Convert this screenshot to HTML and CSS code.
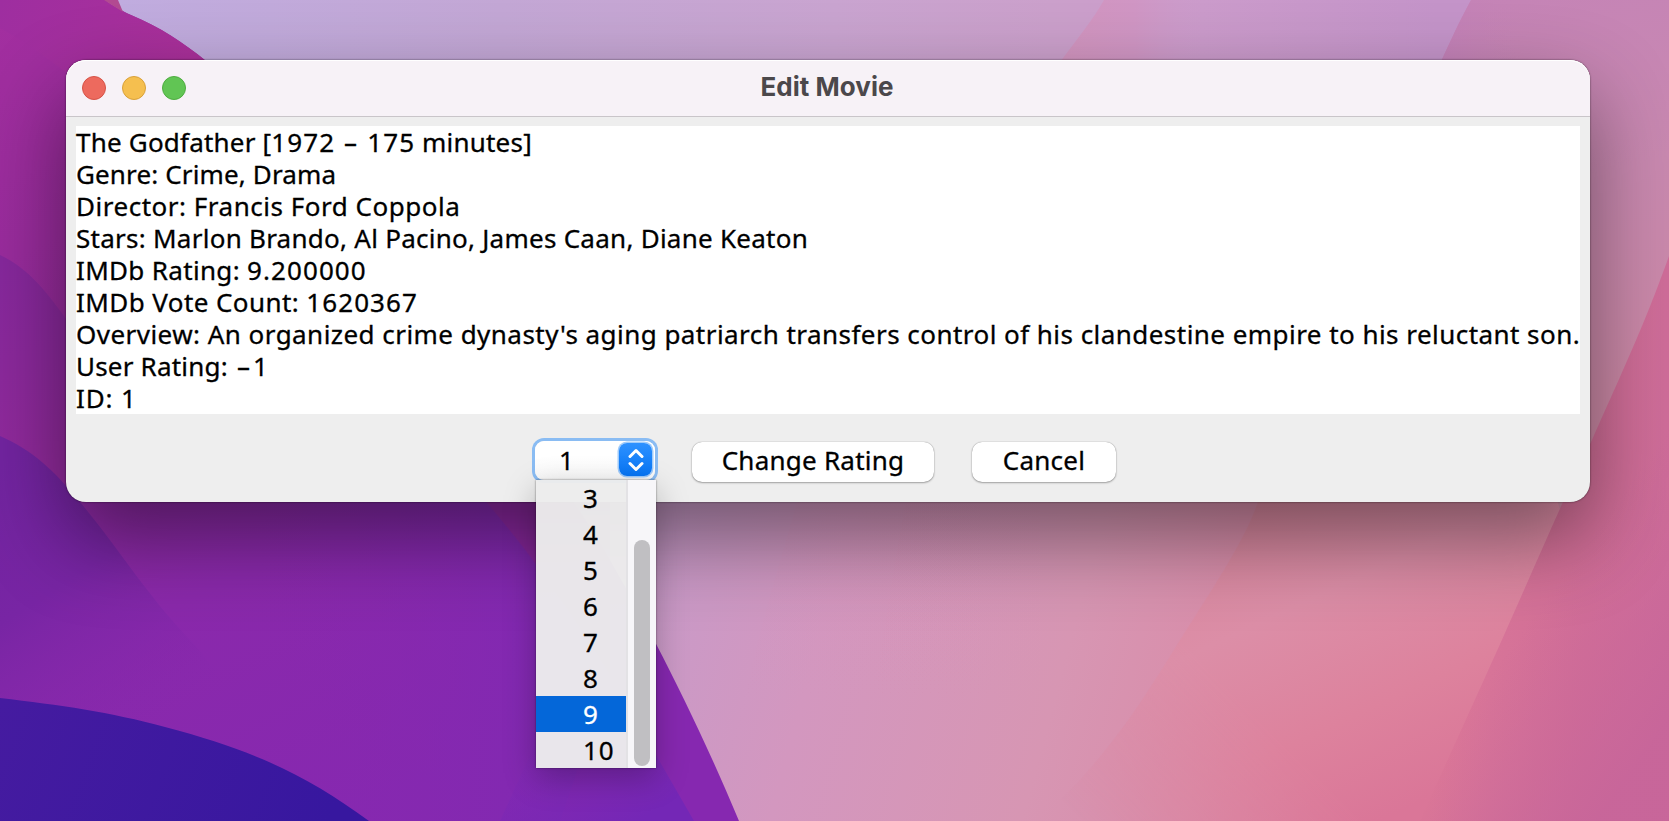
FILE: index.html
```html
<!DOCTYPE html>
<html lang="en">
<head>
<meta charset="utf-8">
<title>Edit Movie</title>
<link rel="stylesheet" href="styles.css">
</head>
<body>
<svg class="wallpaper" viewBox="0 0 1669 821" preserveAspectRatio="none" aria-hidden="true">
  <defs>
    <linearGradient id="sky" x1="0" y1="0" x2="1669" y2="0" gradientUnits="userSpaceOnUse">
      <stop offset=".07" stop-color="#c0acdf"/><stop offset=".3" stop-color="#c3a7d5"/>
      <stop offset=".5" stop-color="#c9a4d0"/><stop offset=".63" stop-color="#cba0cb"/>
      <stop offset=".72" stop-color="#cb9bcb"/><stop offset=".86" stop-color="#c494c9"/>
    </linearGradient>
    <linearGradient id="peak" x1="1060" y1="0" x2="1210" y2="0" gradientUnits="userSpaceOnUse">
      <stop offset="0" stop-color="#d295bf"/><stop offset=".5" stop-color="#d096c4"/><stop offset="1" stop-color="#cb9bcb" stop-opacity="0"/>
    </linearGradient>
    <linearGradient id="low" x1="660" y1="560" x2="1330" y2="740" gradientUnits="userSpaceOnUse">
      <stop offset="0" stop-color="#c99ac8"/><stop offset=".25" stop-color="#d397bf"/>
      <stop offset=".6" stop-color="#d796b3"/><stop offset="1" stop-color="#db86a2"/>
    </linearGradient>
    <linearGradient id="coral" x1="1230" y1="500" x2="1380" y2="821" gradientUnits="userSpaceOnUse">
      <stop offset="0" stop-color="#da889f"/><stop offset=".35" stop-color="#dc8ea7"/>
      <stop offset=".7" stop-color="#dd829d"/><stop offset="1" stop-color="#da7698"/>
    </linearGradient>
    <linearGradient id="coralFade" x1="1060" y1="800" x2="1200" y2="660" gradientUnits="userSpaceOnUse">
      <stop offset="0" stop-color="#fff" stop-opacity="0"/><stop offset=".5" stop-color="#fff" stop-opacity=".45"/><stop offset="1" stop-color="#fff"/>
    </linearGradient>
    <mask id="coralMask" maskUnits="userSpaceOnUse" x="0" y="0" width="1669" height="821"><rect width="1669" height="821" fill="url(#coralFade)"/></mask>
    <linearGradient id="mauve" x1="1520" y1="0" x2="1640" y2="460" gradientUnits="userSpaceOnUse">
      <stop offset="0" stop-color="#c584b6"/><stop offset=".4" stop-color="#c989b0"/><stop offset="1" stop-color="#cd89a3"/>
    </linearGradient>
    <linearGradient id="mauveEdge" x1="1440" y1="0" x2="1520" y2="0" gradientUnits="userSpaceOnUse">
      <stop offset="0" stop-color="#c381b8"/><stop offset="1" stop-color="#c584b6" stop-opacity="0"/>
    </linearGradient>
    <linearGradient id="rose" x1="1430" y1="0" x2="1669" y2="0" gradientUnits="userSpaceOnUse">
      <stop offset="0" stop-color="#dc7897"/><stop offset=".25" stop-color="#d77498"/><stop offset=".65" stop-color="#d16e97"/><stop offset="1" stop-color="#cf6d99"/>
    </linearGradient>
    <linearGradient id="roseFoot" x1="1530" y1="620" x2="1669" y2="720" gradientUnits="userSpaceOnUse">
      <stop offset="0" stop-color="#c8669a" stop-opacity="0"/><stop offset="1" stop-color="#c7659a" stop-opacity=".9"/>
    </linearGradient>
    <linearGradient id="purple" x1="0" y1="0" x2="380" y2="800" gradientUnits="userSpaceOnUse">
      <stop offset="0" stop-color="#a32fa0"/><stop offset=".35" stop-color="#962b9c"/>
      <stop offset=".7" stop-color="#8a29ab"/><stop offset="1" stop-color="#8628b0"/>
    </linearGradient>
    <linearGradient id="violet" x1="40" y1="440" x2="200" y2="690" gradientUnits="userSpaceOnUse">
      <stop offset="0" stop-color="#7224a0"/><stop offset=".45" stop-color="#7825a4"/><stop offset="1" stop-color="#8428ac" stop-opacity="0"/>
    </linearGradient>
    <linearGradient id="indigo" x1="0" y1="700" x2="330" y2="821" gradientUnits="userSpaceOnUse">
      <stop offset="0" stop-color="#451ba0"/><stop offset="1" stop-color="#37179f"/>
    </linearGradient>
    <linearGradient id="magenta" x1="0" y1="0" x2="200" y2="70" gradientUnits="userSpaceOnUse">
      <stop offset="0" stop-color="#9e2ea0"/><stop offset="1" stop-color="#ab309a"/>
    </linearGradient>
    <linearGradient id="plum" x1="0" y1="260" x2="60" y2="460" gradientUnits="userSpaceOnUse">
      <stop offset="0" stop-color="#86289c"/><stop offset="1" stop-color="#912a9c"/>
    </linearGradient>
    <linearGradient id="dusk" x1="260" y1="0" x2="560" y2="0" gradientUnits="userSpaceOnUse">
      <stop offset="0" stop-color="#8829ae" stop-opacity="0"/><stop offset="1" stop-color="#8129b2"/>
    </linearGradient>
    <linearGradient id="foot" x1="560" y1="700" x2="640" y2="821" gradientUnits="userSpaceOnUse">
      <stop offset="0" stop-color="#7d28b4" stop-opacity="0"/><stop offset="1" stop-color="#7427b6"/>
    </linearGradient>
    <linearGradient id="ray" x1="0" y1="500" x2="0" y2="700" gradientUnits="userSpaceOnUse">
      <stop offset="0" stop-color="#db8eb4" stop-opacity=".28"/><stop offset="1" stop-color="#db8eb4" stop-opacity="0"/>
    </linearGradient>
  </defs>
  <rect width="1669" height="821" fill="url(#sky)"/>
  <path d="M1104 0C1094 18 1078 38 1060 62H1220V0Z" fill="url(#peak)"/>
  <rect y="300" width="1669" height="521" fill="url(#low)"/>
  <path d="M800 490C782 560 760 620 745 700H980V490Z" fill="url(#ray)" opacity=".4"/>
  <path d="M908 490C895 560 884 620 875 700H1040V490Z" fill="url(#ray)" opacity=".4"/>
  <path d="M1262 490C1250 530 1228 565 1180 640C1140 705 1120 735 1080 780L1040 821H1669V400H1290Z" fill="url(#coral)" mask="url(#coralMask)"/>
  <path d="M1471 0C1459 22 1450 42 1440 64V300H1500L1560 510L1669 400V0Z" fill="url(#mauve)"/>
  <path d="M1471 0C1459 22 1450 42 1440 64H1520V0Z" fill="url(#mauveEdge)"/>
  <path d="M1669 256C1646 320 1630 355 1592 440C1560 505 1525 590 1477 695L1420 821H1669Z" fill="url(#rose)"/>
  <path d="M1669 256C1646 320 1630 355 1592 440C1560 505 1525 590 1477 695L1420 821H1669Z" fill="url(#roseFoot)"/>
  <path d="M0 0H105C112 5 122 11 131 15C160 27 184 43 206 61C330 180 500 380 600 543C644 618 690 704 739 821H0Z" fill="url(#purple)"/>
  <path d="M0 0H105C112 5 122 11 131 15C160 27 184 43 206 61L210 120H130C85 88 45 53 0 28Z" fill="url(#magenta)"/>
  <path d="M104 0H118L123 12Z" fill="#b24a91"/>
  <path d="M0 255C30 269 48 294 70 324V492C45 473 22 452 0 437Z" fill="url(#plum)"/>
  <path d="M0 436C32 450 54 470 80 502C120 550 150 600 195 645L300 780H0Z" fill="url(#violet)"/>
  <path d="M484 502C510 528 545 570 610 675V502Z" fill="#922a9e" opacity=".6"/>
  <path d="M260 460H450C495 510 545 570 610 675L560 821H260Z" fill="url(#dusk)"/>
  <path d="M560 690L656 755L694 821H500Z" fill="url(#foot)"/>
  <path d="M0 698C60 705 110 712 165 727C260 752 310 778 369 821H0Z" fill="url(#indigo)"/>
</svg>

<main class="window">
  <header class="titlebar">
    <div class="lights">
      <span class="light close"></span><span class="light minimize"></span><span class="light zoom"></span>
    </div>
    <h1 class="title">Edit Movie</h1>
  </header>
  <section class="details">
    <p class="line heading">The Godfather [<span class="num">1972</span> <span class="dash">–</span> <span class="num">175</span> minutes]</p>
    <p class="line genre">Genre: Crime, Drama</p>
    <p class="line director">Director: Francis Ford Coppola</p>
    <p class="line stars">Stars: Marlon Brando, Al Pacino, James Caan, Diane Keaton</p>
    <p class="line rating">IMDb Rating: <span class="num">9.200000</span></p>
    <p class="line votes">IMDb Vote Count: <span class="num">1620367</span></p>
    <p class="line overview">Overview: An organized crime dynasty's aging patriarch transfers control of his clandestine empire to his reluctant son.</p>
    <p class="line user">User Rating: <span class="minus">–</span>1</p>
    <p class="line id">ID: 1</p>
  </section>
  <div class="actions">
    <div class="combo">
      <span class="value">1</span>
      <span class="arrows">
        <svg width="16" height="24" viewBox="0 0 16 24"><path d="M2 8.5L8 2.5L14 8.5M2 15.5L8 21.5L14 15.5"/></svg>
      </span>
      <div class="popup">
        <ul class="options">
          <li>3</li><li>4</li><li>5</li><li>6</li><li>7</li><li>8</li><li class="selected">9</li><li>10</li>
        </ul>
        <div class="scrollbar"><div class="thumb"></div></div>
      </div>
    </div>
    <button class="button change">Change Rating</button>
    <button class="button cancel">Cancel</button>
  </div>
</main>
</body>
</html>
```
FILE: styles.css
```css
* { box-sizing: border-box; margin: 0; padding: 0; }

body {
  width: 1669px;
  height: 821px;
  overflow: hidden;
  padding: 60px 79px 0 66px;
  font-family: "Noto Sans", "Open Sans", sans-serif;
  font-size: 26px;
  color: #000;
}

.wallpaper {
  position: absolute;
  inset: 0;
  width: 1669px;
  height: 821px;
  z-index: -1;
}

.window {
  display: flex;
  flex-direction: column;
  height: 442px;
  border-radius: 20px;
  background: #eee;
  box-shadow: 0 0 2px rgba(0, 0, 0, .65), 0 36px 84px rgba(0, 0, 0, .46);
}

.titlebar {
  display: grid;
  grid-template-columns: 1fr auto 1fr;
  align-items: center;
  height: 57px;
  padding: 0 18px 0 16px;
  border-bottom: 1px solid #c9c5c9;
  border-radius: 20px 20px 0 0;
  background: #f7f2f7;
  box-shadow: inset 0 1px 0 #fff;
}

.lights { display: flex; gap: 16px; }

.light {
  width: 24px;
  height: 24px;
  border-radius: 50%;
  border: 1px solid;
}

.close { background: #ed6a5e; border-color: #d65347; }
.minimize { background: #f5bf4f; border-color: #d9a13a; }
.zoom { background: #61c554; border-color: #4ead40; }

.title {
  font-family: Inter, sans-serif;
  font-size: 26px;
  line-height: 32px;
  font-weight: 700;
  letter-spacing: .05px;
  color: #4b484b;
  padding-bottom: 2px;
}

.details {
  margin: 9px 10px 0;
  height: 288px;
  background: #fff;
}

.line {
  height: 32px;
  line-height: 32px;
  white-space: nowrap;
  -webkit-text-stroke: .3px #000;
}

/* Per-line tracking of the text area's glyph advances */
.heading { letter-spacing: .2px; }
.genre { letter-spacing: .14px; }
.director { letter-spacing: .52px; }
.stars { letter-spacing: .26px; }
.rating { letter-spacing: .33px; }
.votes { letter-spacing: .42px; }
.overview { letter-spacing: .456px; }
.user { letter-spacing: .2px; }
.id { letter-spacing: .9px; }

.num { letter-spacing: 1.08px; }
.dash { margin: 0 3px 0 2px; }
.minus { margin: 0 3px 0 2px; }

.actions {
  display: flex;
  align-items: flex-start;
  padding: 27px 0 0 469px;
}

.combo {
  position: relative;
  display: flex;
  justify-content: space-between;
  width: 120px;
  height: 39px;
  padding: 2px 3px 3px 24px;
  border-radius: 9px;
  background: linear-gradient(#fff 40%, #f8f8f8);
  box-shadow: 0 0 0 3px #8abcf3;
  -webkit-text-stroke: .3px;
}

.value { line-height: 34px; }

.arrows {
  display: flex;
  align-items: center;
  justify-content: center;
  width: 33px;
  height: 33px;
  border-radius: 8px;
  background: linear-gradient(#2e91ff, #0675f5);
  box-shadow: 0 0 0 1.5px #9fcbfb;
}

.arrows path {
  fill: none;
  stroke: #fff;
  stroke-width: 3;
  stroke-linecap: round;
  stroke-linejoin: round;
}

.popup {
  position: absolute;
  top: 39px;
  left: 1px;
  display: flex;
  width: 120px;
  height: 288px;
  background: rgba(236, 236, 236, .97);
  box-shadow: 0 0 2px rgba(0, 0, 0, .5), 0 10px 30px rgba(0, 0, 0, .25);
}

.options { width: 90px; list-style: none; }

.options li { height: 36px; padding-left: 47px; line-height: 36px; letter-spacing: .8px; }

.options .selected { background: #0467d9; color: #fff; }

.scrollbar {
  width: 30px;
  padding: 60px 6px 2px;
  border-left: 2px solid #e3e2e5;
  background: #f7f6f9;
}

.thumb { width: 16px; height: 226px; border-radius: 8px; background: #c0bfc2; }

.button {
  height: 40px;
  border: 0;
  border-radius: 10px;
  background: #fff;
  box-shadow: 0 0 1px rgba(0, 0, 0, .45), 0 1px 2px rgba(0, 0, 0, .3);
  font: inherit;
  line-height: 36px;
  padding-bottom: 4px;
  white-space: nowrap;
  margin-top: 1px;
  letter-spacing: .25px;
  -webkit-text-stroke: .3px #000;
}

.change { width: 242px; margin-left: 37px; }
.cancel { width: 144px; margin-left: 38px; }
```
